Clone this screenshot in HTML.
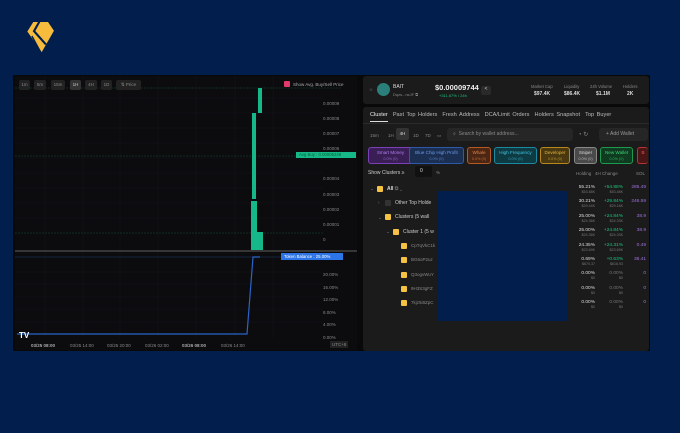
<!DOCTYPE html>
<html><head><meta charset="utf-8"><style>
*{margin:0;padding:0;box-sizing:border-box}
body{width:680px;height:433px;background:#011e4d;position:relative;overflow:hidden;font-family:"Liberation Sans",sans-serif;color:#ddd}
.a{position:absolute;white-space:nowrap}
.t{font-size:4.5px;color:#888}
.btn{position:absolute;top:80px;height:10px;background:#222;border-radius:2px;font-size:4.5px;color:#888;text-align:center;line-height:10px}
.chip{position:absolute;top:147px;height:17px;border-radius:3px;border:1px solid;font-size:4.6px;text-align:center;padding-top:2px;line-height:6px}
.chip span{display:block;font-size:3.8px;opacity:.7}
.cb{position:absolute;width:6px;height:6px;background:#f5c242;border-radius:1px}
.num{position:absolute;font-size:4.8px;text-align:right;width:40px;line-height:5px}
.num i{display:block;font-style:normal;font-size:3.6px;color:#777}
</style></head><body>
<svg class="a" style="left:20px;top:15px" width="42" height="42" viewBox="0 0 120 120">
<polygon points="38,20 80,20 97,45 62,106 21,47" fill="#f8bc3c"/>
<polyline points="57,16 40,46 74,84" fill="none" stroke="#011e4d" stroke-width="6"/>
<line x1="34" y1="60" x2="58" y2="104" stroke="#011e4d" stroke-width="4"/>
</svg>
<div class="a" style="left:13px;top:75px;width:637px;height:276px;background:#090909"></div>
<div class="a" style="left:15px;top:76px;width:342px;height:274px;background:#0c0c0f"></div>
<svg class="a" style="left:15px;top:76px" width="342" height="274">
<g stroke="#16161a" stroke-width="0.5">
<line x1="0" y1="22" x2="308" y2="22"/><line x1="0" y1="37" x2="308" y2="37"/><line x1="0" y1="52" x2="308" y2="52"/><line x1="0" y1="67" x2="308" y2="67"/><line x1="0" y1="82" x2="308" y2="82"/><line x1="0" y1="97" x2="308" y2="97"/><line x1="0" y1="112" x2="308" y2="112"/><line x1="0" y1="127" x2="308" y2="127"/><line x1="0" y1="142" x2="308" y2="142"/><line x1="0" y1="196" x2="308" y2="196"/><line x1="0" y1="208" x2="308" y2="208"/><line x1="0" y1="221" x2="308" y2="221"/><line x1="0" y1="233" x2="308" y2="233"/><line x1="0" y1="246" x2="308" y2="246"/>
<line x1="30" y1="0" x2="30" y2="262"/><line x1="68" y1="0" x2="68" y2="262"/><line x1="105" y1="0" x2="105" y2="262"/><line x1="143" y1="0" x2="143" y2="262"/><line x1="181" y1="0" x2="181" y2="262"/><line x1="220" y1="0" x2="220" y2="262"/><line x1="258" y1="0" x2="258" y2="262"/>
</g>
<g stroke="#174a33" stroke-width="0.5" stroke-dasharray="2,1"><line x1="0" y1="12" x2="326" y2="12"/><line x1="0" y1="80" x2="308" y2="80"/><line x1="0" y1="157" x2="308" y2="157"/></g>
<line x1="0" y1="175" x2="342" y2="175" stroke="#444" stroke-width="1.5"/>
<line x1="0" y1="181" x2="270" y2="181" stroke="#1e3b6a" stroke-width="0.6"/>
<rect x="236" y="125" width="6" height="49" fill="#16b88a"/>
<rect x="237" y="37" width="4" height="86" fill="#16b88a"/>
<rect x="243" y="12" width="4" height="25" fill="#16b88a"/>
<rect x="242" y="156" width="6" height="18" fill="#16b88a"/>
<polyline points="2,258 232,258 238,181 245,181" fill="none" stroke="#2a64c8" stroke-width="1.2"/>
<text x="4" y="262" font-size="8" font-weight="bold" fill="#fff" font-family="Liberation Sans">TV</text>
</svg>
<div class="btn" style="left:19px;width:11px">1m</div>
<div class="btn" style="left:34px;width:12px">5m</div>
<div class="btn" style="left:51px;width:14px">15m</div>
<div class="btn" style="left:70px;width:11px;background:#333;color:#ccc">1H</div>
<div class="btn" style="left:85px;width:12px">4H</div>
<div class="btn" style="left:101px;width:11px">1D</div>
<div class="btn" style="left:116px;width:25px">⇅ Price</div>
<div class="a" style="left:284px;top:81px;width:6px;height:6px;background:#e23a6a;border-radius:1px"></div>
<div class="a t" style="left:293px;top:82px;color:#aaa">Show Avg. Buy/Sell Price</div>
<div class="a" style="left:296px;top:152px;width:60px;height:6px;background:#16b88a;font-size:4.3px;color:#063;line-height:6px;padding-left:3px">Avg Buy : 0.00005248</div>
<div class="a" style="left:281px;top:253px;width:62px;height:7px;background:#2d74e6;font-size:4.3px;color:#fff;line-height:7px;padding-left:3px">Token Balance : 25.00%</div>
<div class="a t" style="left:323px;top:96px;line-height:15.1px">0.00009<br>0.00008<br>0.00007<br>0.00006<br>&nbsp;<br>0.00004<br>0.00003<br>0.00002<br>0.00001<br>0</div>
<div class="a t" style="left:323px;top:269px;line-height:12.6px">20.00%<br>16.00%<br>12.00%<br>8.00%<br>4.00%<br>0.00%</div>
<div class="a t" style="left:31px;top:343px;font-weight:bold;color:#aaa">03/25 08:00</div>
<div class="a t" style="left:70px;top:343px">03/25 14:00</div>
<div class="a t" style="left:107px;top:343px">03/25 20:00</div>
<div class="a t" style="left:145px;top:343px">03/26 02:00</div>
<div class="a t" style="left:182px;top:343px;font-weight:bold;color:#aaa">03/26 08:00</div>
<div class="a t" style="left:221px;top:343px">03/26 14:00</div>
<div class="a t" style="left:330px;top:341px;background:#222;padding:1px 2px">UTC+8</div>
<div class="a" style="left:363px;top:76px;width:286px;height:28px;background:#1b1b1b;border-radius:3px"></div>
<div class="a" style="left:363px;top:107px;width:286px;height:244px;background:#1b1b1b;border-radius:3px"></div>
<div class="a t" style="left:369px;top:87px">☆</div>
<div class="a" style="left:377px;top:83px;width:13px;height:13px;border-radius:50%;background:#2a7f7a"></div>
<div class="a" style="left:393px;top:84px;font-size:5px;color:#ddd">BAIT</div>
<div class="a t" style="left:393px;top:92px;font-size:4px">Dqzs...ncJF ⧉</div>
<div class="a" style="left:435px;top:83px;font-size:7.5px;font-weight:bold;color:#eee">$0.00009744</div>
<div class="a" style="left:439px;top:93px;font-size:4px;color:#1fc37f">+311.67% / 24h</div>
<div class="a" style="left:481px;top:86px;width:10px;height:9px;background:#2a2a2a;border-radius:2px;font-size:5px;text-align:center;color:#ccc">&lt;</div>
<div class="a t" style="left:531px;top:84px;font-size:4.2px">Market Cap</div><div class="a" style="left:534px;top:91px;font-size:5px;font-weight:bold">$97.4K</div>
<div class="a t" style="left:564px;top:84px;font-size:4.2px">Liquidity</div><div class="a" style="left:564px;top:91px;font-size:5px;font-weight:bold">$86.4K</div>
<div class="a t" style="left:590px;top:84px;font-size:4.2px">24h Volume</div><div class="a" style="left:596px;top:91px;font-size:5px;font-weight:bold">$1.1M</div>
<div class="a t" style="left:623px;top:84px;font-size:4.2px">Holders</div><div class="a" style="left:627px;top:91px;font-size:5px;font-weight:bold">2K</div>
<div class="a" style="left:370px;top:112px;font-size:5.6px;color:#bbb;word-spacing:1px">
<span style="color:#eee;border-bottom:1px solid #ddd;padding-bottom:3px">Cluster</span>&nbsp; Past Top Holders &nbsp;Fresh Address &nbsp;DCA/Limit Orders &nbsp;Holders Snapshot &nbsp;Top Buyer</div>
<div class="a" style="left:363px;top:123px;width:286px;height:1px;background:#2b2b2b"></div>
<div class="a t" style="left:370px;top:133px">15m</div>
<div class="a t" style="left:388px;top:133px">1H</div>
<div class="a" style="left:396px;top:128px;width:13px;height:12px;background:#333;border-radius:2px;font-size:4.5px;color:#ddd;text-align:center;line-height:12px">4H</div>
<div class="a t" style="left:413px;top:133px">1D</div>
<div class="a t" style="left:425px;top:133px">7D</div>
<div class="a t" style="left:437px;top:133px">▭</div>
<div class="a" style="left:447px;top:128px;width:126px;height:13px;background:#262626;border-radius:3px;font-size:5px;color:#888;line-height:13px;padding-left:6px">⌕ &nbsp;Search by wallet address...</div>
<div class="a t" style="left:578px;top:131px;font-size:6px">◔ ↻</div>
<div class="a" style="left:599px;top:128px;width:49px;height:13px;background:#262626;border-radius:3px;font-size:5px;color:#999;line-height:13px;padding-left:7px">+ Add Wallet</div>
<div class="chip" style="left:368px;width:45px;border-color:#7b3fb8;background:#3a1f57;color:#b07ee8">Smart Money<span>0.0% (0)</span></div>
<div class="chip" style="left:409px;width:55px;border-color:#2c5aa8;background:#1a2f52;color:#6f9ae8">Blue Chip High Profit<span>0.0% (0)</span></div>
<div class="chip" style="left:467px;width:24px;border-color:#b55a24;background:#4b2613;color:#e8844a">Whale<span>0.0% (0)</span></div>
<div class="chip" style="left:494px;width:43px;border-color:#1a8aa0;background:#0e3a44;color:#3fc7e0">High Frequency<span>0.0% (0)</span></div>
<div class="chip" style="left:540px;width:30px;border-color:#b8881e;background:#4a3810;color:#e4b43a">Developer<span>0.0% (0)</span></div>
<div class="chip" style="left:574px;width:23px;border-color:#888;background:#4a4a4a;color:#ddd">Sniper<span>0.0% (0)</span></div>
<div class="chip" style="left:600px;width:33px;border-color:#1e9a4e;background:#0f3b20;color:#3fd477">New Wallet<span>0.0% (0)</span></div>
<div class="chip" style="left:637px;width:11px;border-color:#b33;background:#4a1515;color:#e55;border-right:none">B</div>
<div class="a" style="left:368px;top:170px;font-size:5px;color:#ccc">Show Clusters ≥</div>
<div class="a" style="left:415px;top:166px;width:17px;height:11px;background:#111;border-radius:2px;font-size:5px;line-height:11px;padding-left:5px">0</div>
<div class="a t" style="left:436px;top:170px">%</div>
<div class="a t" style="left:576px;top:171px">Holding &nbsp; 4H Change</div>
<div class="a t" style="left:636px;top:171px">SOL</div>
<div class="a t" style="left:370px;top:186px">⌄</div><div class="cb" style="left:377px;top:186px"></div><div class="a" style="left:387px;top:186px;font-size:5px;font-weight:bold">All <span style="color:#666">⧉ ⌄</span></div>
<div class="a t" style="left:378px;top:200px">›</div><div class="cb" style="left:385px;top:200px;background:#333"></div><div class="a" style="left:395px;top:200px;font-size:5px;color:#ccc">Other Top Holde</div>
<div class="a t" style="left:378px;top:215px">⌄</div><div class="cb" style="left:385px;top:214px"></div><div class="a" style="left:395px;top:214px;font-size:5px;color:#ccc">Clusters (5 wall</div>
<div class="a t" style="left:386px;top:229px">⌄</div><div class="cb" style="left:393px;top:229px"></div><div class="a" style="left:403px;top:229px;font-size:5px;color:#ccc">Cluster 1 (5 w</div>
<div class="cb" style="left:401px;top:243px"></div><div class="a t" style="left:411px;top:243px">CpTqVkC1k</div>
<div class="cb" style="left:401px;top:257px"></div><div class="a t" style="left:411px;top:257px">BG6oP2uz</div>
<div class="cb" style="left:401px;top:272px"></div><div class="a t" style="left:411px;top:272px">Q3ogvWuY</div>
<div class="cb" style="left:401px;top:286px"></div><div class="a t" style="left:411px;top:286px">9H3S3gFZ</div>
<div class="cb" style="left:401px;top:300px"></div><div class="a t" style="left:411px;top:300px">7kjz5i8ZpC</div>
<div class="num" style="left:555px;top:185px">55.21%<i>$53.88K</i></div><div class="num" style="left:583px;top:185px;color:#1fc37f">+54.88%<i>$53.48K</i></div><div class="num" style="left:606px;top:185px;color:#a070e0">285.49</div>
<div class="num" style="left:555px;top:199px">30.21%<i>$29.44K</i></div><div class="num" style="left:583px;top:199px;color:#1fc37f">+29.84%<i>$29.18K</i></div><div class="num" style="left:606px;top:199px;color:#a070e0">246.59</div>
<div class="num" style="left:555px;top:214px">25.00%<i>$24.36K</i></div><div class="num" style="left:583px;top:214px;color:#1fc37f">+24.84%<i>$24.33K</i></div><div class="num" style="left:606px;top:214px;color:#a070e0">38.9</div>
<div class="num" style="left:555px;top:228px">25.00%<i>$24.36K</i></div><div class="num" style="left:583px;top:228px;color:#1fc37f">+24.84%<i>$24.33K</i></div><div class="num" style="left:606px;top:228px;color:#a070e0">38.9</div>
<div class="num" style="left:555px;top:243px">24.35%<i>$23.69K</i></div><div class="num" style="left:583px;top:243px;color:#1fc37f">+24.31%<i>$23.69K</i></div><div class="num" style="left:606px;top:243px;color:#a070e0">0.49</div>
<div class="num" style="left:555px;top:257px">0.69%<i>$670.37</i></div><div class="num" style="left:583px;top:257px;color:#1fc37f">+0.63%<i>$616.93</i></div><div class="num" style="left:606px;top:257px;color:#a070e0">38.41</div>
<div class="num" style="left:555px;top:271px">0.00%<i>$0</i></div><div class="num" style="left:583px;top:271px;color:#777">0.00%<i>$0</i></div><div class="num" style="left:606px;top:271px;color:#a070e0">0</div>
<div class="num" style="left:555px;top:286px">0.00%<i>$0</i></div><div class="num" style="left:583px;top:286px;color:#777">0.00%<i>$0</i></div><div class="num" style="left:606px;top:286px;color:#a070e0">0</div>
<div class="num" style="left:555px;top:300px">0.00%<i>$0</i></div><div class="num" style="left:583px;top:300px;color:#777">0.00%<i>$0</i></div><div class="num" style="left:606px;top:300px;color:#a070e0">0</div>
<div class="a" style="left:437px;top:191px;width:130px;height:130px;background:#011e4d"></div>
</body></html>
